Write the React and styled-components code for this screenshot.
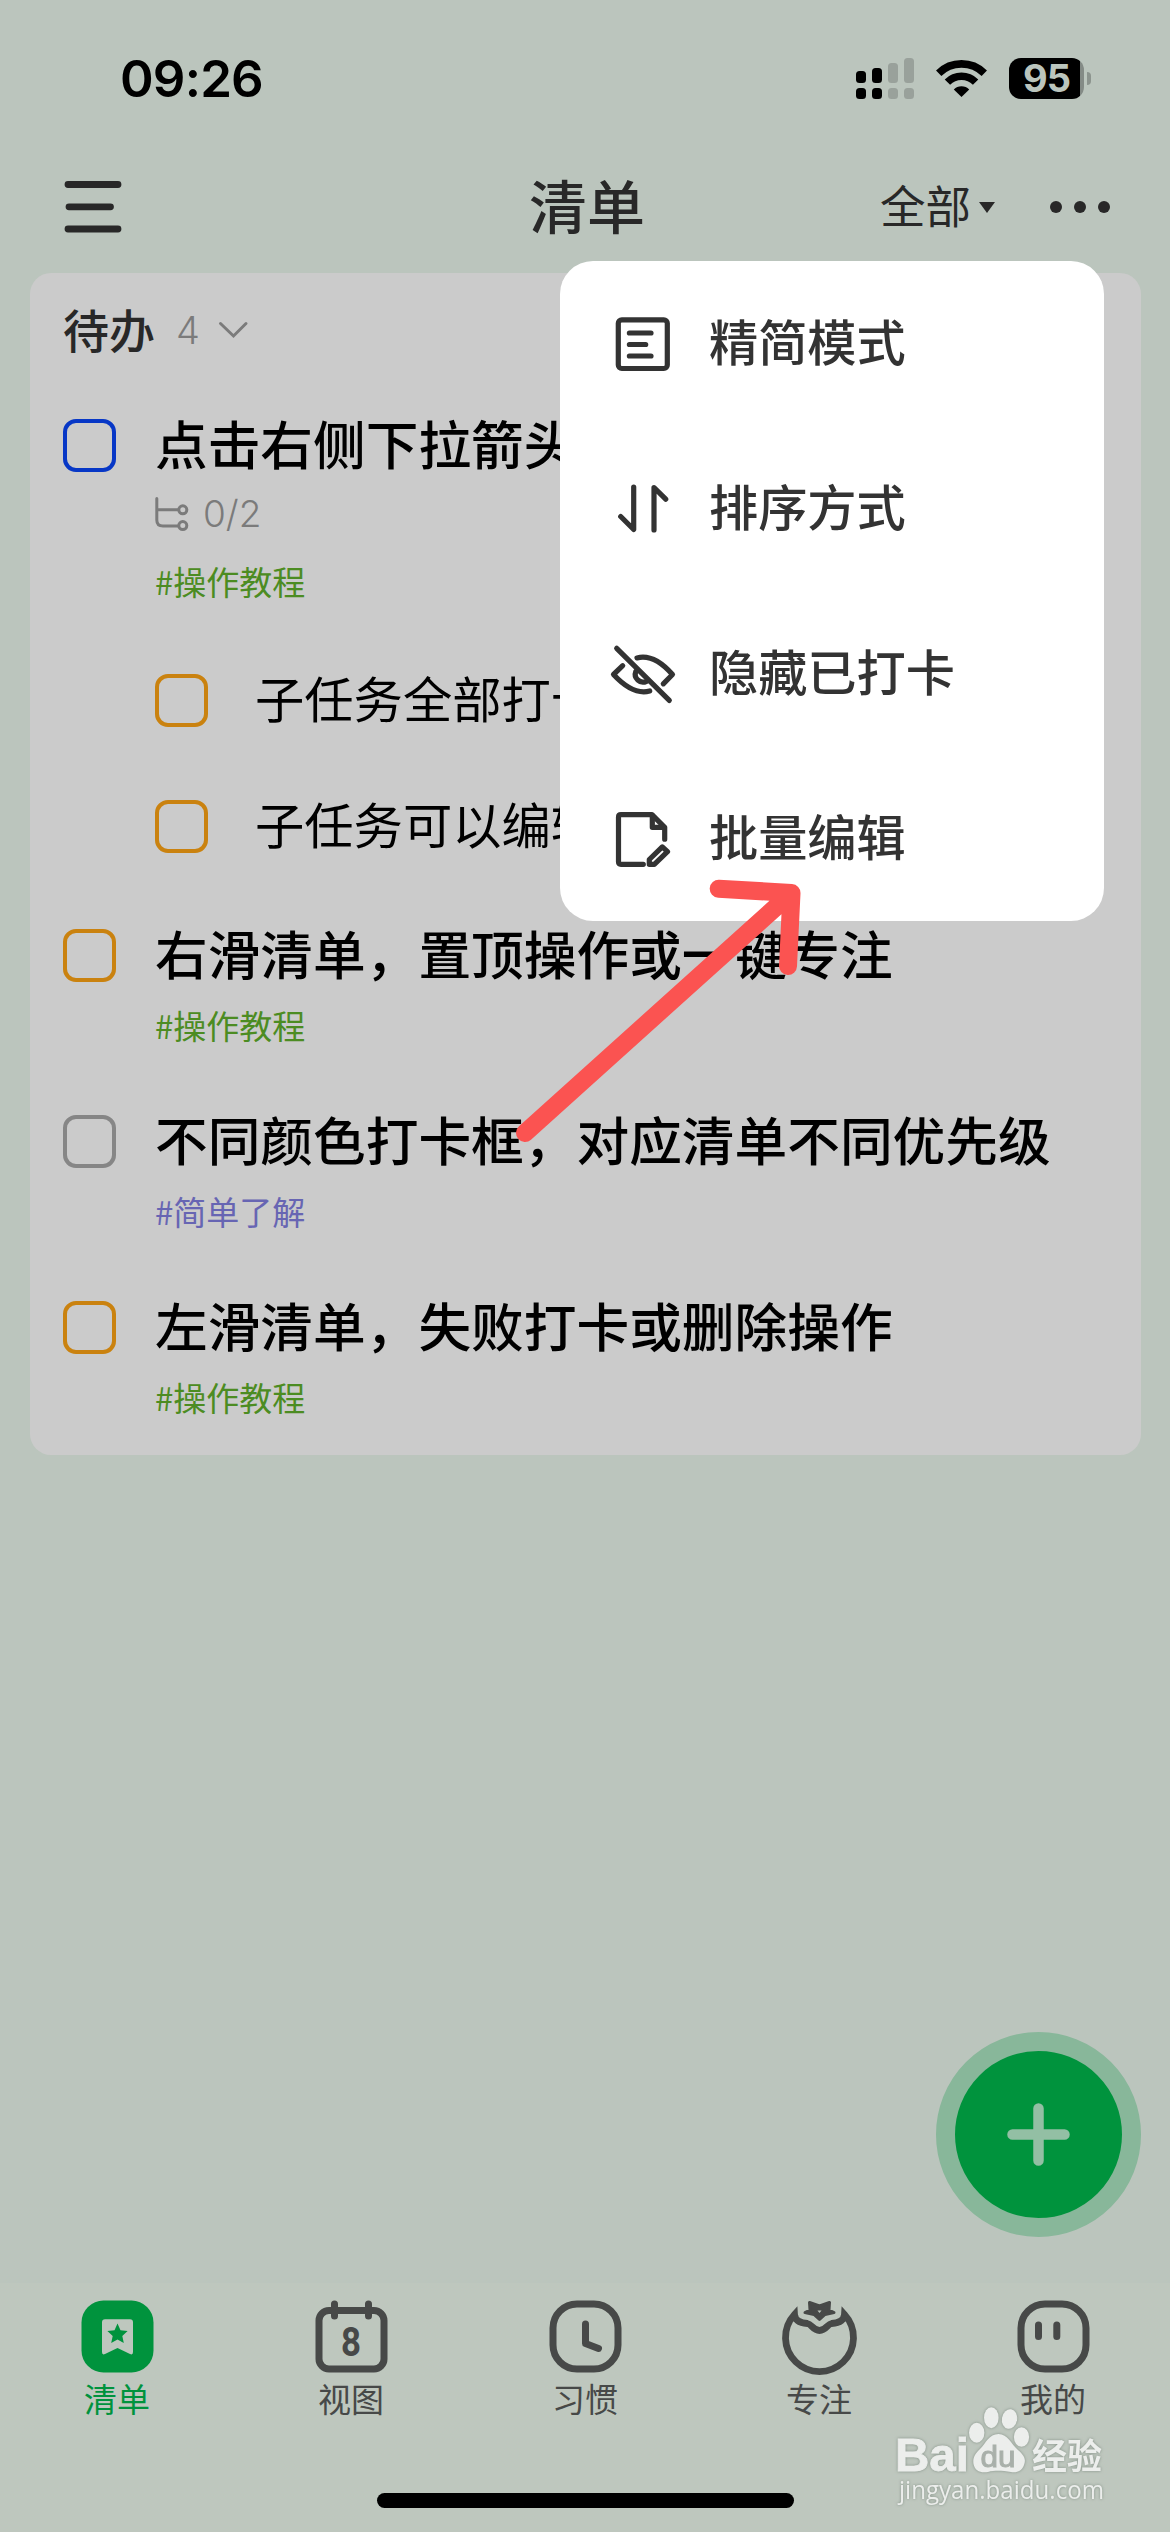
import React from 'react';
import styled, { createGlobalStyle } from 'styled-components';

const GlobalStyle = createGlobalStyle`
  body {
    margin: 0;
    background: #bbc5bd;
    font-family: 'Noto Sans CJK SC', 'Noto Sans', sans-serif;
  }
  * {
    box-sizing: border-box;
  }
  svg {
    display: block;
    overflow: visible;
  }
`;

const Screen = styled.div`
  position: relative;
  display: flex;
  flex-direction: column;
  width: 1170px;
  height: 2532px;
  overflow: hidden;
  background: #bbc5bd;
  white-space: nowrap;
`;

const StatusBar = styled.div`
  display: flex;
  align-items: center;
  justify-content: space-between;
  height: 156px;
  padding: 0 79px 0 120px;
`;

const Clock = styled.div`
  font-family: Inter, sans-serif;
  font-size: 51px;
  font-weight: 600;
  letter-spacing: -0.8px;
  color: #000000;
`;

const StatusIcons = styled.div`
  display: flex;
  align-items: center;
  gap: 22px;
`;

const BatteryGroup = styled.div`
  display: flex;
  align-items: center;
`;

const Battery = styled.div`
  display: flex;
  align-items: center;
  justify-content: center;
  width: 75px;
  height: 41px;
  border-radius: 12px;
  background: linear-gradient(90deg, #000000 0 71px, #848b86 71px);
  font-family: Inter, sans-serif;
  font-size: 38px;
  font-weight: 700;
  letter-spacing: -1px;
  color: #bbc5bd;
`;

const BatteryTip = styled.div`
  width: 4px;
  height: 13px;
  margin-left: 3px;
  border-radius: 0 4px 4px 0;
  background: #8c948e;
`;

const NavBar = styled.div`
  display: grid;
  grid-template-columns: 1fr auto 1fr;
  align-items: center;
  height: 102px;
  margin-bottom: 15px;
  padding: 0 60px 0 64px;
  color: #282828;
`;

const NavTitle = styled.div`
  height: 102px;
  line-height: 96px;
  font-size: 58px;
  font-weight: 500;
`;

const NavActions = styled.div`
  display: flex;
  align-items: center;
  justify-content: flex-end;
`;

const FilterLabel = styled.div`
  height: 102px;
  line-height: 97px;
  font-size: 45.5px;
`;

const Triangle = styled.div`
  margin-left: 8px;
  border: 8.5px solid transparent;
  border-top: 11px solid #282828;
  border-bottom: 0;
`;

const Dots = styled.div`
  display: flex;
  gap: 12px;
  margin-left: 55px;

  i {
    width: 12px;
    height: 12px;
    border-radius: 50%;
    background: #282828;
  }
`;

const Card = styled.div`
  width: 1111px;
  height: 1182px;
  margin-left: 30px;
  border-radius: 21px;
  background: #cbcbcb;
`;

const CardHeader = styled.div`
  display: flex;
  align-items: center;
  height: 114px;
  padding-left: 33px;
  color: #282828;
`;

const CardTitle = styled.span`
  margin-top: -5px;
  font-size: 46px;
  font-weight: 500;
`;

const Count = styled.span`
  margin: 0 19px 0 21px;
  font-family: Inter, sans-serif;
  font-size: 38px;
  font-weight: 300;
  color: #7b7b7b;
`;

const Task = styled.div`
  display: flex;
  height: ${({ $hasMeta }) => ($hasMeta ? 250.5 : 186)}px;
  padding-left: 33px;
`;

const SubTasks = styled.div`
  height: 259.5px;
  padding-left: 125px;
`;

const SubTask = styled.div`
  display: flex;
  align-items: center;
  height: 126px;
  font-size: 49.3px;
  color: #000000;
`;

const Checkbox = styled.div`
  flex: none;
  width: 53px;
  height: 53px;
  margin-top: ${({ $top }) => $top || 0}px;
  border: 4.5px solid ${({ $color }) => $color};
  border-radius: 13px;
`;

const TaskBody = styled.div`
  flex: 1;
  margin-left: 39px;
`;

const TaskTitle = styled.div`
  height: 108.5px;
  padding-top: 4.5px;
  line-height: 100px;
  font-size: 52.7px;
  font-weight: 500;
  color: #000000;
`;

const SubTaskTitle = styled.div`
  margin: -8px 0 0 47px;
`;

const Meta = styled.div`
  display: flex;
  align-items: center;
  height: 36px;
  margin-bottom: 30px;
  font-family: Inter, sans-serif;
  font-size: 37px;
  font-weight: 300;
  color: #7b7b7b;

  svg {
    margin-right: 15px;
  }
`;

const Tag = styled.div`
  height: 44px;
  line-height: 39px;
  font-size: 33px;
  color: ${({ $color }) => $color};
`;

const Menu = styled.div`
  position: absolute;
  top: 261px;
  left: 560px;
  width: 544px;
  height: 660px;
  border-radius: 33px;
  background: #ffffff;
`;

const MenuItem = styled.div`
  display: flex;
  align-items: center;
  height: 165px;
  padding-left: 50px;
  font-size: 49.2px;
  font-weight: 500;
  color: #333333;

  span {
    margin: -8px 0 0 33px;
  }
`;

const AddButton = styled.button`
  position: absolute;
  top: 2032px;
  left: 936px;
  display: flex;
  align-items: center;
  justify-content: center;
  width: 205px;
  height: 205px;
  padding: 0;
  border: 19.5px solid #88b79a;
  border-radius: 50%;
  background: #00933d;
`;

const TabBar = styled.div`
  display: grid;
  grid-template-columns: repeat(5, 1fr);
  height: 210px;
  margin-top: auto;
  background: #bec7be;
`;

const Tab = styled.div`
  display: flex;
  flex-direction: column;
  align-items: center;
  padding-top: 17px;
  color: ${({ $active }) => ($active ? '#00933d' : '#474948')};
`;

const TabLabel = styled.div`
  margin-top: 5px;
  line-height: 40px;
  font-size: 33px;
`;

const HomeArea = styled.div`
  height: 39px;
  background: #bec7be;
`;

const HomeIndicator = styled.div`
  width: 417px;
  height: 15px;
  margin: 0 auto;
  border-radius: 8px;
  background: #000000;
`;

const Overlay = styled.svg`
  position: absolute;
  top: ${({ $top }) => $top}px;
  left: ${({ $left }) => $left}px;
`;

const WatermarkLogo = styled(Overlay)`
  filter: drop-shadow(0 0 1.5px rgba(90, 105, 95, 0.6));
`;

const signalBars = [
  { x: 0, y: 13, color: '#000000' },
  { x: 16, y: 10, color: '#000000' },
  { x: 32, y: 5, color: '#99a19b' },
  { x: 48, y: 0, color: '#99a19b' }
];

const SignalIcon = () => (
  <svg width="58" height="41">
    {signalBars.map(({ x, y, color }) => (
      <g key={x} fill={color}>
        <rect x={x} y={y} width="10" height={25 - y} rx="3.5" />
        <rect x={x} y="30" width="10" height="11" rx="3.5" />
      </g>
    ))}
  </svg>
);

const WifiIcon = () => (
  <svg width="51" height="37" viewBox="0 0 51 37">
    <g fill="none" stroke="#000000" strokeWidth="7.6">
      <path d="M2.7 13.2A32.5 32.5 0 0 1 48.3 13.2" />
      <path d="M11.4 22.1A20 20 0 0 1 39.6 22.1" />
    </g>
    <path d="M25.5 37L17.8 29.4A11 11 0 0 1 33.2 29.4Z" />
  </svg>
);

const MenuIcon = () => (
  <svg width="58" height="52" viewBox="0 0 58 52" stroke="#282828" strokeWidth="6.8" strokeLinecap="round">
    <path d="M4 3.5H54M5 25.8H46.5M4 48H54" />
  </svg>
);

const ChevronDown = () => (
  <svg width="29" height="16" viewBox="0 0 29 16" fill="none" stroke="#7b7b7b" strokeWidth="3" strokeLinecap="round">
    <path d="M1.5 1.5L14.5 14L27 1.5" />
  </svg>
);

const TreeIcon = () => (
  <svg width="33" height="34" viewBox="0 0 33 34" fill="none" stroke="#7b7b7b" strokeWidth="3" strokeLinecap="round">
    <path d="M1.8 1.5V23Q1.8 29 8 29H23M2 12.8H23" />
    <circle cx="27.8" cy="12.8" r="4" />
    <circle cx="27.8" cy="28.6" r="4" />
  </svg>
);

const menuIcons = {
  compact: (
    <>
      <rect x="8.3" y="8.8" width="49" height="48.7" rx="3.5" />
      <path d="M19.4 22H41M19.4 33.5H35.7M19.4 45H41" />
    </>
  ),
  sort: <path d="M10.7 40.5L23.7 53.5V11M44 53.9V11.5L55.7 23.2" />,
  hide: (
    <>
      <path d="M6.7 7.3L59.3 59.4" />
      <path d="M12.7 24.7L3.5 33.5Q23 54.5 39.7 50" />
      <path d="M27 16.9Q44 12.5 62.5 33.5L53.3 42.8" />
      <path d="M25.8 30.5A7.8 7.8 0 0 0 36.5 40.3" />
    </>
  ),
  edit: (
    <>
      <path d="M33.3 58.3H11Q8.5 58.3 8.5 55.8V11.2Q8.5 8.7 11 8.7H42L54.7 21.3V33.2" />
      <path d="M42.3 9.5V21.3H54" />
      <path d="M52.3 40.9L57.5 45.7L44.3 58.3H39.3V53.5Z" />
    </>
  )
};

const menuItems = [
  { icon: 'compact', label: '精简模式' },
  { icon: 'sort', label: '排序方式' },
  { icon: 'hide', label: '隐藏已打卡' },
  { icon: 'edit', label: '批量编辑' }
];

const Squircle = () => (
  <rect x="4" y="4" width="65" height="65" rx="24" fill="none" stroke="currentColor" strokeWidth="7" />
);

const tabIcons = {
  list: (
    <>
      <rect x="0.5" y="0.5" width="72" height="72" rx="22" fill="#00933d" />
      <path
        d="M24 19.3H49Q52 19.3 52 22.3V52Q52 55.5 49 54L36.5 48L24 54Q21 55.5 21 52V22.3Q21 19.3 24 19.3Z"
        fill="#bec7be"
      />
      <path
        d="M36.5 23.5L39.5 30.2L46.6 31L41.3 35.9L42.8 43L36.5 39.4L30.2 43L31.7 35.9L26.4 31L33.5 30.2Z"
        fill="#00933d"
      />
    </>
  ),
  calendar: (
    <>
      <rect x="4" y="10.5" width="65" height="58.5" rx="10" fill="none" stroke="currentColor" strokeWidth="7" />
      <path d="M19.5 4V16M53.5 4V16" stroke="currentColor" strokeWidth="7" strokeLinecap="round" />
      <text
        transform="translate(36 55.5) scale(0.85 1)"
        textAnchor="middle"
        fontFamily="Roboto"
        fontSize="41"
        fontWeight="700"
        fill="currentColor"
      >
        8
      </text>
    </>
  ),
  clock: (
    <>
      <Squircle />
      <path
        d="M36.5 24V43.5L49.5 48.5"
        fill="none"
        stroke="currentColor"
        strokeWidth="7"
        strokeLinecap="round"
        strokeLinejoin="round"
      />
    </>
  ),
  tomato: (
    <>
      <path
        d="M11.5 15.5A34 34 0 1 0 61.5 15.5Q61 23.5 48.5 24.5C44.5 25 43 31.5 36.5 31.5S28.500 25 24.500 24.5Q12 23.5 11.500 15.500Z"
        transform="translate(0 -1)"
        fill="none"
        stroke="currentColor"
        strokeWidth="6.8"
      />
      <path
        d="M26.5 2.5L36.5 6L46.5 2.5L46 10L51 12.500L42 14.500L36.5 19.500L31 14.500L22 12.500L27 10Z"
        fill="currentColor"
        stroke="currentColor"
        strokeWidth="3"
        strokeLinejoin="round"
      />
      <path d="M34.5 10.5H38.5L36.5 13Z" fill="#bec7be" />
    </>
  ),
  face: (
    <>
      <Squircle />
      <path d="M21.5 25V36.5M39.8 25V36.5" stroke="currentColor" strokeWidth="7" strokeLinecap="round" />
    </>
  )
};

const tabs = [
  { icon: 'list', label: '清单', active: true },
  { icon: 'calendar', label: '视图' },
  { icon: 'clock', label: '习惯' },
  { icon: 'tomato', label: '专注' },
  { icon: 'face', label: '我的' }
];

const GREEN = '#4c8c22';
const ORANGE = '#ca820f';

const tasks = [
  {
    title: '点击右侧下拉箭头',
    color: '#0737c6',
    progress: '0/2',
    tag: '#操作教程',
    tagColor: GREEN,
    children: ['子任务全部打卡', '子任务可以编辑']
  },
  { title: '右滑清单，置顶操作或一键专注', color: ORANGE, tag: '#操作教程', tagColor: GREEN },
  { title: '不同颜色打卡框，对应清单不同优先级', color: '#868686', tag: '#简单了解', tagColor: '#6765b3' },
  { title: '左滑清单，失败打卡或删除操作', color: ORANGE, tag: '#操作教程', tagColor: GREEN }
];

const TaskItem = ({ task }) => (
  <>
    <Task $hasMeta={Boolean(task.progress)}>
      <Checkbox $color={task.color} $top={32} />
      <TaskBody>
        <TaskTitle>{task.title}</TaskTitle>
        {task.progress && (
          <Meta>
            <TreeIcon />
            {task.progress}
          </Meta>
        )}
        <Tag $color={task.tagColor}>{task.tag}</Tag>
      </TaskBody>
    </Task>
    {task.children && (
      <SubTasks>
        {task.children.map(title => (
          <SubTask key={title}>
            <Checkbox $color={ORANGE} />
            <SubTaskTitle>{title}</SubTaskTitle>
          </SubTask>
        ))}
      </SubTasks>
    )}
  </>
);

const Arrow = () => (
  <Overlay
    $top={860}
    $left={500}
    width="320"
    height="300"
    fill="none"
    stroke="#fb5351"
    strokeWidth="18"
    strokeLinecap="round"
    strokeLinejoin="round"
  >
    <path d="M25 273L291.5 33M218.7 28.7L291.5 33L288 106" />
  </Overlay>
);

const Watermark = () => (
  <WatermarkLogo $top={2400} $left={890} width="230" height="110" fill="#eceeec">
    <text
      x="5"
      y="71"
      fontFamily="Liberation Sans"
      fontWeight="700"
      fontSize="47"
      stroke="#eceeec"
      strokeWidth="0.8"
      textLength="74"
      lengthAdjust="spacingAndGlyphs"
    >
      Bai
    </text>
    <ellipse cx="86.7" cy="32.7" rx="7.7" ry="10" />
    <ellipse cx="101.3" cy="17.7" rx="7.3" ry="10.5" />
    <ellipse cx="119.5" cy="19" rx="7.6" ry="9.8" transform="rotate(10 119.5 19)" />
    <ellipse cx="131.5" cy="37" rx="7.6" ry="9.8" />
    <path d="M108.5 34C118 34 121 44 128 50C135 56 136 60 134 65C132 71 127 73 121 72C113 71 106 70 98 72C90 73 85 71 83.5 64C82.5 58 85 54 90 49C96 43 99 34 108.5 34Z" />
    <text
      x="90.5"
      y="66.5"
      fontFamily="Liberation Sans"
      fontSize="30"
      fill="#a9b0aa"
      stroke="#a9b0aa"
      strokeWidth="1"
      textLength="35"
      lengthAdjust="spacingAndGlyphs"
    >
      du
    </text>
    <text x="142" y="68.5" fontFamily="Noto Sans CJK SC" fontWeight="700" fontSize="35">
      经验
    </text>
    <text x="9" y="98.5" fontFamily="Open Sans" fontSize="25" textLength="205" lengthAdjust="spacingAndGlyphs">
      jingyan.baidu.com
    </text>
  </WatermarkLogo>
);

const App = () => (
  <Screen>
    <GlobalStyle />
    <StatusBar>
      <Clock>09:26</Clock>
      <StatusIcons>
        <SignalIcon />
        <WifiIcon />
        <BatteryGroup>
          <Battery>95</Battery>
          <BatteryTip />
        </BatteryGroup>
      </StatusIcons>
    </StatusBar>
    <NavBar>
      <MenuIcon />
      <NavTitle>清单</NavTitle>
      <NavActions>
        <FilterLabel>全部</FilterLabel>
        <Triangle />
        <Dots>
          <i />
          <i />
          <i />
        </Dots>
      </NavActions>
    </NavBar>
    <Card>
      <CardHeader>
        <CardTitle>待办</CardTitle>
        <Count>4</Count>
        <ChevronDown />
      </CardHeader>
      {tasks.map(task => (
        <TaskItem key={task.title} task={task} />
      ))}
    </Card>
    <TabBar>
      {tabs.map(({ icon, label, active }) => (
        <Tab key={icon} $active={active}>
          <svg width="73" height="73">
            {tabIcons[icon]}
          </svg>
          <TabLabel>{label}</TabLabel>
        </Tab>
      ))}
    </TabBar>
    <HomeArea>
      <HomeIndicator />
    </HomeArea>
    <AddButton aria-label="add">
      <svg width="63" height="63" stroke="#93bfa4" strokeWidth="10.5" strokeLinecap="round">
        <path d="M31.5 5.5V57.5M5.5 31.5H57.5" />
      </svg>
    </AddButton>
    <Menu>
      {menuItems.map(({ icon, label }) => (
        <MenuItem key={icon}>
          <svg
            width="66"
            height="66"
            fill="none"
            stroke="#333333"
            strokeWidth="5.2"
            strokeLinecap="round"
            strokeLinejoin="round"
          >
            {menuIcons[icon]}
          </svg>
          <span>{label}</span>
        </MenuItem>
      ))}
    </Menu>
    <Arrow />
    <Watermark />
  </Screen>
);

export default App;
